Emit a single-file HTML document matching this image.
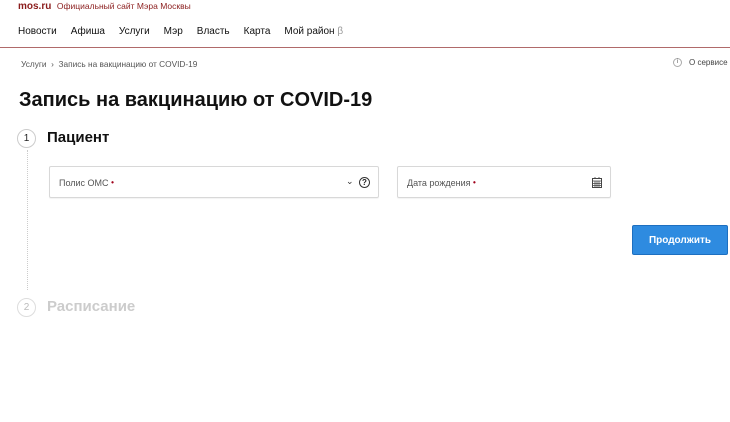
<!DOCTYPE html>
<html><head><meta charset="utf-8"><style>
*{margin:0;padding:0;box-sizing:border-box}
body{width:730px;height:422px;background:#fff;font-family:"Liberation Sans",sans-serif;position:relative;overflow:hidden;color:#222}
.a{position:absolute;white-space:nowrap}
.circ{position:absolute;border:1px solid #ccc;border-radius:50%;width:19px;height:19px;font-size:10px;text-align:center;line-height:17px}
.fld{position:absolute;border:1px solid #d8d8d8;border-radius:2px;height:32px;box-shadow:0 1px 1px rgba(0,0,0,.05)}
.fld span{position:absolute;left:9px;top:11px;font-size:9px;color:#555}
.fld b{color:#a0001a;font-size:8px;vertical-align:top}
</style></head><body>
<div class="a" style="left:18px;top:1px;font-size:10px;color:#8b1d1d"><b>mos.ru</b>&nbsp; <span style="font-size:8.5px">Официальный сайт Мэра Москвы</span></div>
<div class="a" style="left:18px;top:26px;font-size:10px;color:#111;word-spacing:0">
<span style="margin-right:14px">Новости</span><span style="margin-right:14px">Афиша</span><span style="margin-right:14px">Услуги</span><span style="margin-right:14px">Мэр</span><span style="margin-right:14px">Власть</span><span style="margin-right:14px">Карта</span><span>Мой район <span style="color:#999">β</span></span></div>
<div class="a" style="left:0;top:47px;width:730px;height:1px;background:#b06a6a"></div>
<div class="a" style="left:21px;top:59px;font-size:8.3px;color:#555">Услуги &nbsp;›&nbsp; Запись на вакцинацию от COVID-19</div>
<div class="a" style="left:673px;top:58px;width:9px;height:9px;border:1px solid #aaa;border-radius:50%;font-size:6px;text-align:center;line-height:7px;color:#555">i</div>
<div class="a" style="left:689px;top:58px;font-size:8px;color:#444">О сервисе</div>
<div class="a" style="left:19px;top:89px;font-size:20px;font-weight:bold;color:#111">Запись на вакцинацию от COVID-19</div>
<div class="circ" style="left:17px;top:129px">1</div>
<div class="a" style="left:47px;top:129px;font-size:15px;font-weight:bold;color:#111">Пациент</div>
<div class="a" style="left:27px;top:150px;height:140px;border-left:1px dotted #ccc"></div>
<div class="fld" style="left:49px;top:166px;width:330px"><span>Полис ОМС <b>•</b></span>
<div class="a" style="left:296px;top:9px;font-size:9px;color:#333">⌄</div>
<div class="a" style="left:309px;top:10px;width:11px;height:11px;border:1px solid #333;border-radius:50%;font-size:8px;text-align:center;line-height:9px;font-weight:bold">?</div></div>
<div class="fld" style="left:397px;top:166px;width:214px"><span>Дата рождения <b>•</b></span>
<svg class="a" style="left:194px;top:10px" width="10" height="11" viewBox="0 0 10 11"><rect x=".5" y="1.5" width="9" height="9" fill="none" stroke="#444"/><path d="M0 4h10M3 4v7M5 4v7M7 4v7M0 6.5h10M0 8.5h10M3 0v2M7 0v2" stroke="#444" stroke-width=".8"/></svg></div>
<div class="a" style="left:632px;top:225px;width:96px;height:30px;background:#2e8be0;border:1px solid #1d6fc0;border-radius:2px;color:#fff;font-size:10px;font-weight:bold;text-align:center;line-height:30px">Продолжить</div>
<div class="circ" style="left:17px;top:298px;color:#bbb;border-color:#ddd">2</div>
<div class="a" style="left:47px;top:298px;font-size:15px;font-weight:bold;color:#ccc">Расписание</div>
</body></html>
